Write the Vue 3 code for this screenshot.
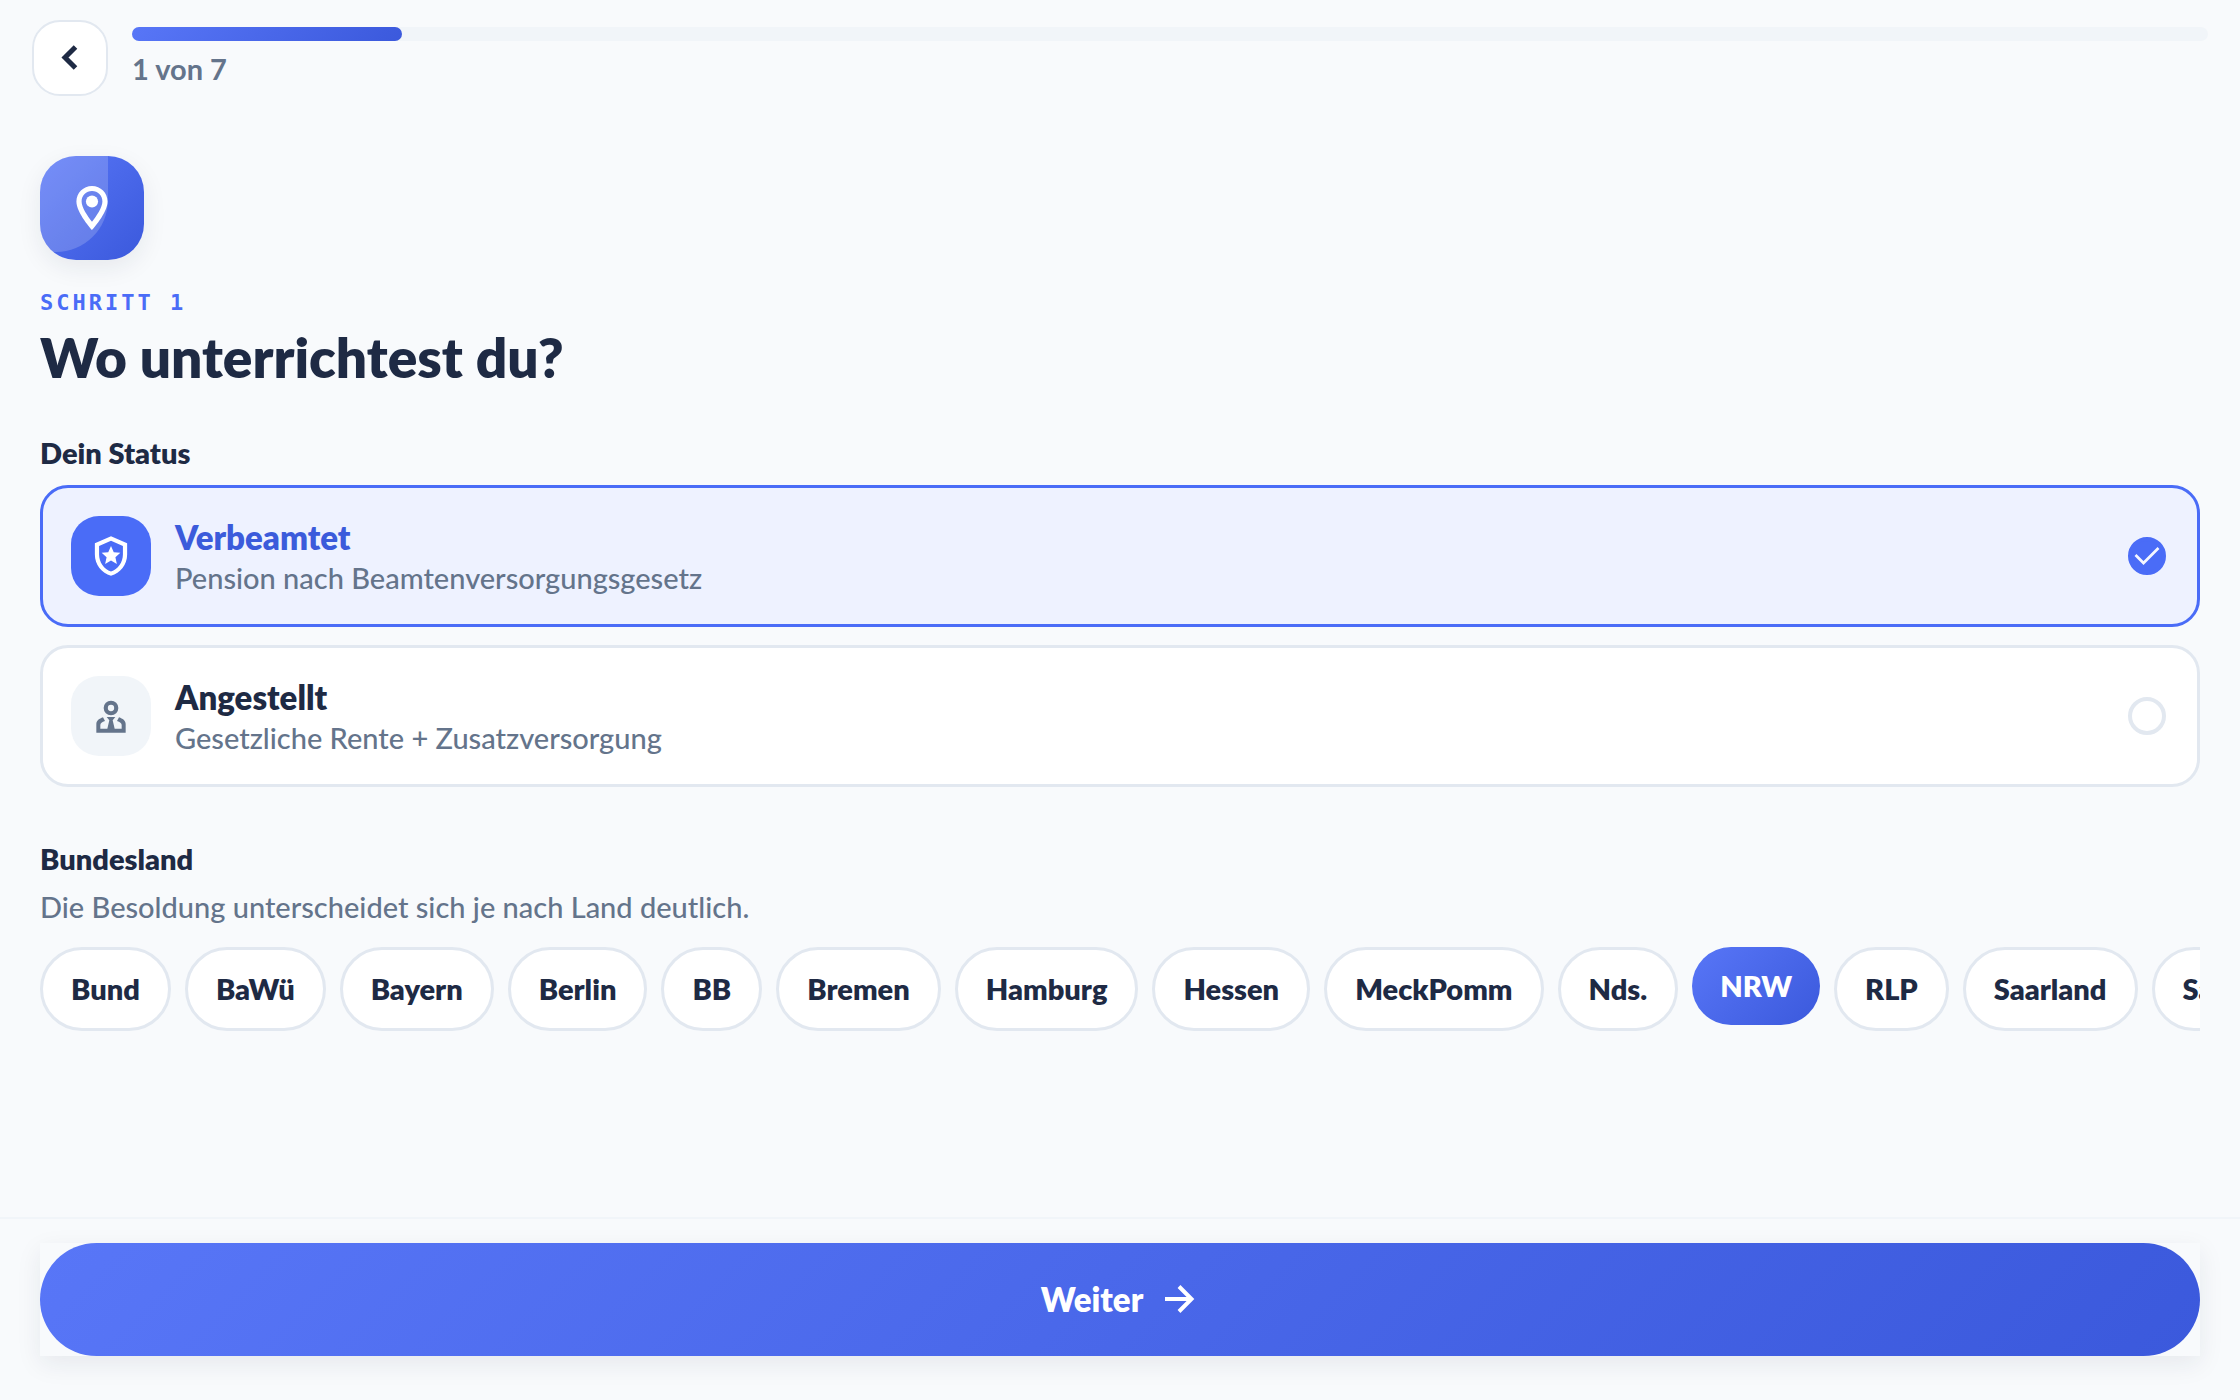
<template>
  <div class="page">
    <header class="topbar">
      <button class="back" type="button" aria-label="Zurück">
        <svg width="48" height="48" viewBox="0 0 48 48" aria-hidden="true">
          <path d="M29.500 13 19 23.500 29.500 34" fill="none" stroke="currentColor" stroke-width="5" />
        </svg>
      </button>
      <div class="progress">
        <div class="track">
          <div class="fill" :style="{ width: progress + '%' }"></div>
        </div>
        <span class="count">1 von 7</span>
      </div>
    </header>

    <main class="content">
      <div class="hero-icon">
        <svg width="52" height="52" viewBox="0 0 24 24" fill="currentColor" aria-hidden="true">
          <path d="M12 1.800C8 1.800 4.800 5 4.800 9c0 5.300 7.200 13.200 7.200 13.200S19.200 14.300 19.200 9C19.200 5 16 1.800 12 1.800zM7.200 9c0-2.700 2.100-4.800 4.800-4.800s4.800 2.100 4.800 4.800c0 2.700-2.700 6.700-4.800 9.300C9.900 15.700 7.200 11.700 7.200 9z" />
          <circle cx="12" cy="9" r="2.800" />
        </svg>
      </div>
      <p class="step">SCHRITT 1</p>
      <h1 class="title">Wo unterrichtest du?</h1>

      <h2 class="label">Dein Status</h2>
      <div class="options">
        <label
          v-for="option in options"
          :key="option.id"
          class="option"
          :class="{ active: status === option.id }"
        >
          <span class="option-icon">
            <svg v-if="option.id === 'verbeamtet'" width="44" height="44" viewBox="0 0 24 24" fill="currentColor" aria-hidden="true">
              <path fill-rule="evenodd" d="M12 1.200 3.200 5v6.200c0 5.400 3.700 10.300 8.800 11.600 5.100-1.300 8.800-6.200 8.800-11.600V5zM12 3.700l6.500 2.800v4.700c0 4.200-2.700 8.100-6.500 9.300-3.800-1.200-6.500-5.100-6.500-9.300V6.500z" />
              <path d="m12 6.500 1.500 3.400 3.600.300-2.700 2.500.8 3.700-3.200-1.900-3.200 1.900.8-3.700-2.700-2.500 3.600-.3z" />
            </svg>
            <svg v-else width="30" height="33" viewBox="0 0 90 99" fill="currentColor" aria-hidden="true">
              <path fill-rule="evenodd" d="M45 2a22 22 0 1 0 0 44 22 22 0 0 0 0-44zm0 12.500a9.500 9.500 0 1 1 0 19 9.500 9.500 0 0 1 0-19z" />
              <path d="M1 98V72c0-10 9-16 20-20l6 11c-9 3-14 7-14 12v11h21l6-25-8-10h26l-8 10 6 25h21V75c0-5-5-9-14-12l6-11c11 4 20 10 20 20v26z" />
            </svg>
          </span>
          <span class="option-text">
            <strong>{{ option.title }}</strong>
            <span>{{ option.text }}</span>
          </span>
          <span class="radio">
            <input v-model="status" type="radio" name="status" :value="option.id" />
            <svg v-if="status === option.id" width="38" height="38" viewBox="0 0 38 38" aria-hidden="true">
              <path d="m7.500 18 8 8L30.500 11" fill="none" stroke="#f5f7ff" stroke-width="2.700" />
            </svg>
          </span>
        </label>
      </div>

      <h2 class="label">Bundesland</h2>
      <p class="hint">Die Besoldung unterscheidet sich je nach Land deutlich.</p>
      <div class="chips">
        <button
          v-for="land in laender"
          :key="land"
          type="button"
          class="chip"
          :class="{ active: selected === land }"
          @click="selected = land"
        >
          {{ land }}
        </button>
      </div>
    </main>

    <footer class="footer">
      <div class="next-wrap">
        <button class="next" type="button">
          Weiter
          <svg width="40" height="40" viewBox="0 0 40 40" aria-hidden="true">
            <path d="M6 20h26M20 7.500 32.500 20 20 32.500" fill="none" stroke="currentColor" stroke-width="4" />
          </svg>
        </button>
      </div>
    </footer>
  </div>
</template>

<script setup>
import { ref } from 'vue'

const progress = 13
const status = ref('verbeamtet')
const selected = ref('NRW')

const options = [
  { id: 'verbeamtet', title: 'Verbeamtet', text: 'Pension nach Beamtenversorgungsgesetz' },
  { id: 'angestellt', title: 'Angestellt', text: 'Gesetzliche Rente + Zusatzversorgung' },
]

const laender = [
  'Bund', 'BaWü', 'Bayern', 'Berlin', 'BB', 'Bremen', 'Hamburg', 'Hessen',
  'MeckPomm', 'Nds.', 'NRW', 'RLP', 'Saarland', 'Sachsen',
]
</script>

<style>
body {
  margin: 0;
  background: #f8fafc;
}
</style>

<style scoped>
.page {
  display: flex;
  flex-direction: column;
  min-height: 100vh;
  box-sizing: border-box;
  color: #1e2a44;
  font-family: Lato, 'Noto Sans', sans-serif;
  font-size: 29px;
  font-weight: 500;
  line-height: 40px;
}

button {
  font: inherit;
  color: inherit;
  cursor: pointer;
}

.topbar {
  display: flex;
  gap: 24px;
  padding: 20px 32px 0;
}

.back {
  display: grid;
  place-items: center;
  flex: none;
  width: 76px;
  height: 76px;
  padding: 0;
  border: 2px solid #e2e8f0;
  border-radius: 28px;
  background: #fff;
}

.progress {
  flex: 1;
  padding-top: 7px;
}

.track {
  height: 14px;
  border-radius: 7px;
  background: #f1f5f9;
}

.fill {
  height: 100%;
  border-radius: 7px;
  background: linear-gradient(135deg, #5876f7, #3b59dc);
}

.count {
  display: block;
  margin-top: 8px;
  color: #64748b;
  font-weight: 700;
}

.content {
  flex: 1;
  padding: 60px 40px 40px;
}

.hero-icon {
  position: relative;
  display: grid;
  place-items: center;
  overflow: hidden;
  width: 104px;
  height: 104px;
  border-radius: 36px;
  background: linear-gradient(135deg, #5876f7, #3b59dc);
  box-shadow: 0 8px 24px rgba(30, 42, 68, 0.08);
  color: #fff;
}

/* light sheen in the upper left corner */
.hero-icon::before {
  content: '';
  position: absolute;
  top: 0;
  left: 0;
  width: 68px;
  height: 96px;
  border-radius: 0 0 52px 0;
  background: rgba(255, 255, 255, 0.18);
}

.hero-icon svg {
  position: relative;
}

.step {
  margin: 25px 0 0;
  color: #4a6cf7;
  font-family: 'DejaVu Sans Mono', monospace;
  font-size: 22px;
  font-weight: 700;
  letter-spacing: 3px;
  line-height: 36px;
}

.title {
  margin: 2px 0 0;
  font-size: 55px;
  font-weight: 800;
  line-height: 68px;
}

.label {
  margin: 42px 0 8px;
  font-size: 29px;
  font-weight: 800;
  line-height: 40px;
}

.options {
  display: grid;
  gap: 18px;
  margin: 12px 0 52px;
}

.option {
  display: flex;
  align-items: center;
  gap: 24px;
  padding: 28px;
  border: 3px solid #e2e8f0;
  border-radius: 28px;
  background: #fff;
  cursor: pointer;
}

.option.active {
  border-color: #4a6cf7;
  background: #eef2ff;
}

.option-icon {
  display: grid;
  place-items: center;
  width: 80px;
  height: 80px;
  border-radius: 28px;
  background: #f1f5f9;
  color: #64748b;
}

.active .option-icon {
  background: #4a6cf7;
  color: #fff;
}

.option-text {
  display: grid;
  flex: 1;
  gap: 2px;
  color: #64748b;
  line-height: 36px;
}

.option-text strong {
  color: #1e2a44;
  font-size: 33px;
  font-weight: 800;
  line-height: 42px;
}

.active .option-text strong {
  color: #3b5bdb;
}

.radio {
  display: grid;
  margin-right: 3px;
}

.radio input,
.radio svg {
  grid-area: 1 / 1;
}

.radio svg {
  pointer-events: none;
}

.radio input {
  appearance: none;
  width: 38px;
  height: 38px;
  margin: 0;
  border: 4px solid #e2e8f0;
  border-radius: 50%;
}

.radio input:checked {
  border-color: #4a6cf7;
  background: #4a6cf7;
}

.hint {
  margin: 0 0 20px;
  color: #64748b;
}

.chips {
  display: flex;
  align-items: flex-start;
  gap: 14px;
  overflow: hidden;
}

.chip {
  flex: none;
  padding: 19px 28px;
  border: 3px solid #e2e8f0;
  border-radius: 42px;
  background: #fff;
  font-weight: 800;
}

.chip.active {
  border: 0;
  background: linear-gradient(135deg, #5876f7, #3b59dc);
  color: #fff;
}

.footer {
  padding: 24px 40px 44px;
  border-top: 2px solid #f1f5f9;
}

.next-wrap {
  background: #f8fafc;
  box-shadow: 0 8px 24px rgba(30, 42, 68, 0.08);
}

.next {
  display: flex;
  align-items: center;
  justify-content: center;
  gap: 16px;
  width: 100%;
  height: 113px;
  padding: 0 0 2px;
  border: 0;
  border-radius: 57px;
  background: linear-gradient(135deg, #5876f7, #3b59dc);
  color: #fff;
  font-size: 33px;
  font-weight: 800;
}
</style>
